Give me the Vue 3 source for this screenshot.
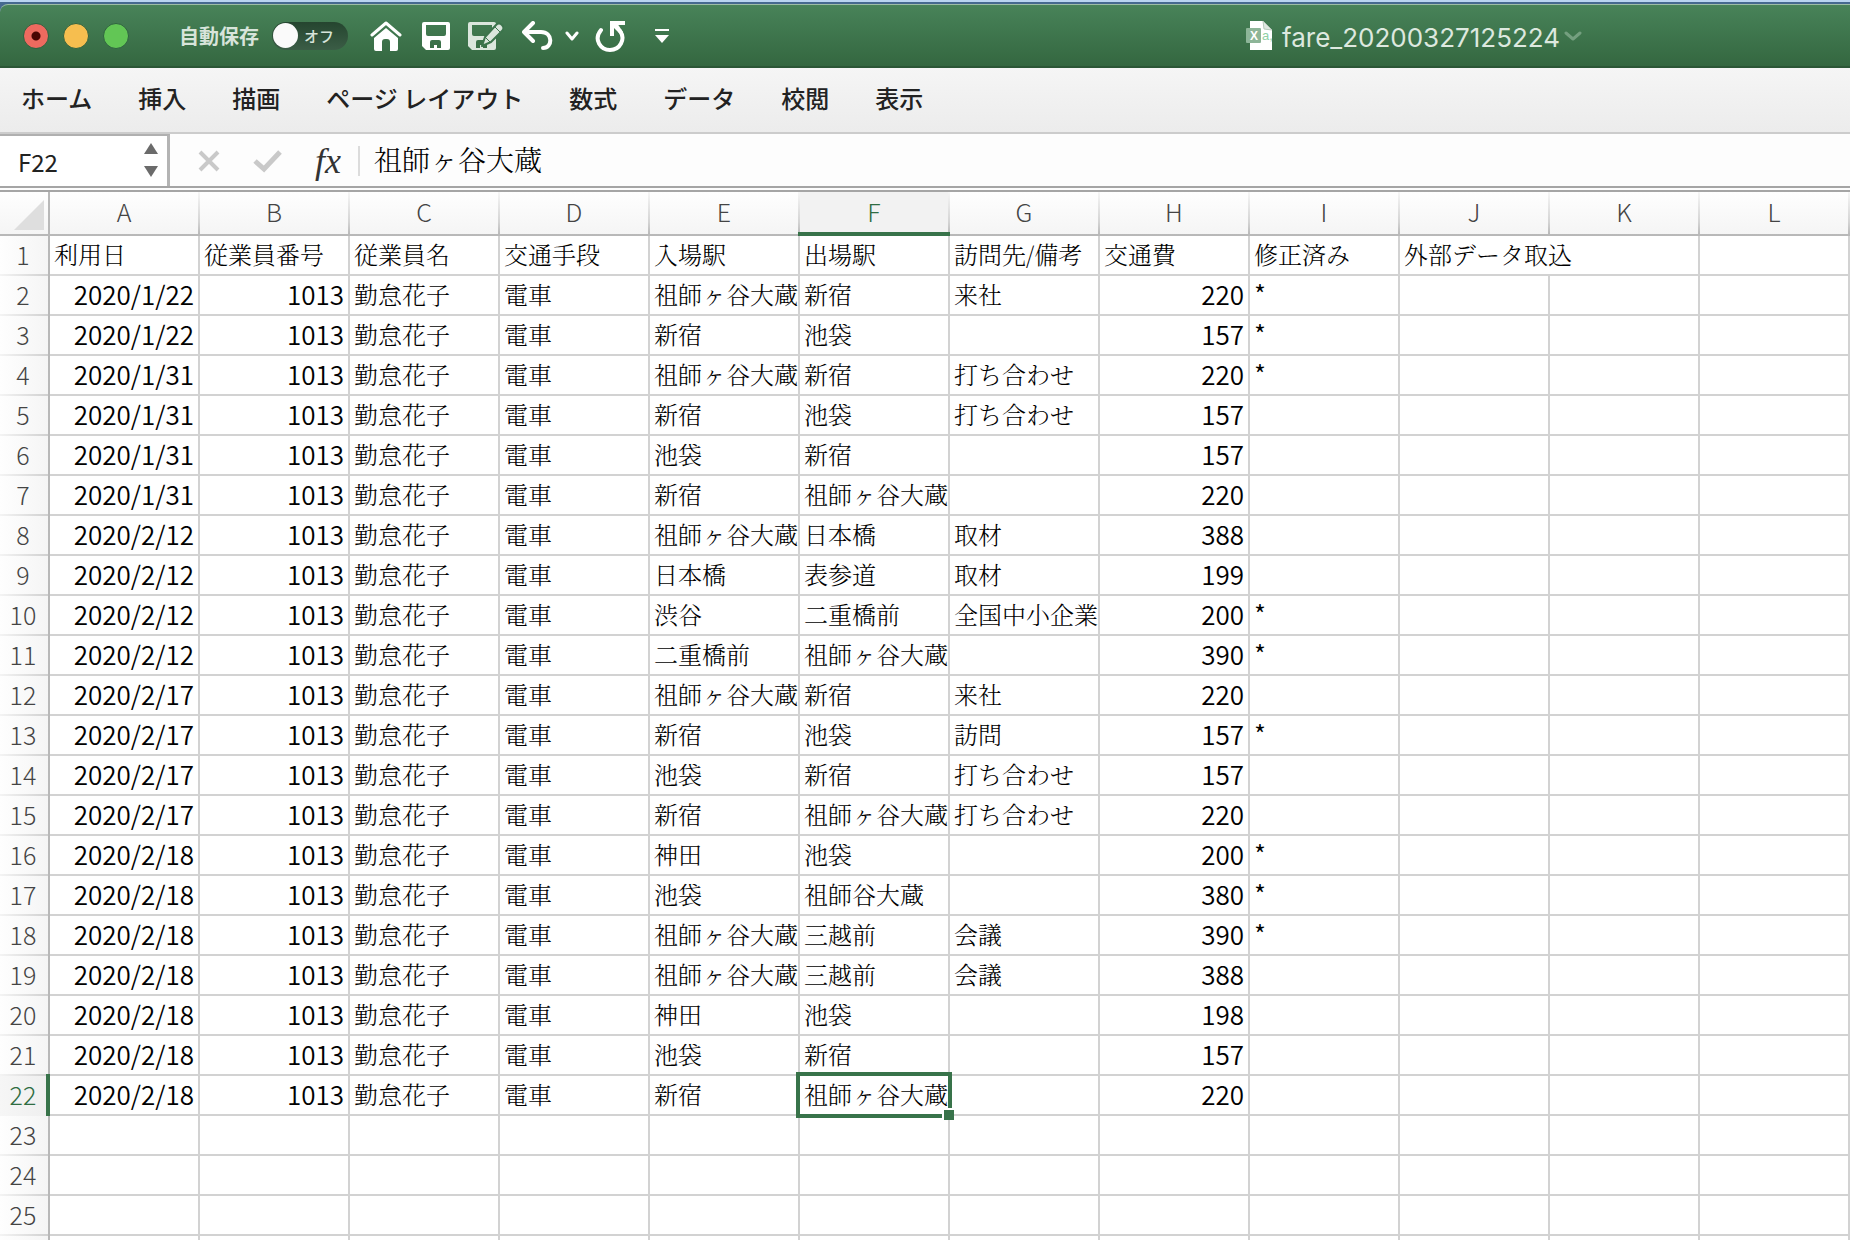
<script setup>
import { ref } from 'vue'

const tabs = ['ホーム', '挿入', '描画', 'ページ レイアウト', '数式', 'データ', '校閲', '表示']
const columns = 'ABCDEFGHIJKL'.split('')
const headings = ['利用日', '従業員番号', '従業員名', '交通手段', '入場駅', '出場駅', '訪問先/備考', '交通費', '修正済み']

const trips = [
  ['2020/1/22', '祖師ヶ谷大蔵', '新宿', '来社', 220, '*'],
  ['2020/1/22', '新宿', '池袋', '', 157, '*'],
  ['2020/1/31', '祖師ヶ谷大蔵', '新宿', '打ち合わせ', 220, '*'],
  ['2020/1/31', '新宿', '池袋', '打ち合わせ', 157, ''],
  ['2020/1/31', '池袋', '新宿', '', 157, ''],
  ['2020/1/31', '新宿', '祖師ヶ谷大蔵', '', 220, ''],
  ['2020/2/12', '祖師ヶ谷大蔵', '日本橋', '取材', 388, ''],
  ['2020/2/12', '日本橋', '表参道', '取材', 199, ''],
  ['2020/2/12', '渋谷', '二重橋前', '全国中小企業', 200, '*'],
  ['2020/2/12', '二重橋前', '祖師ヶ谷大蔵', '', 390, '*'],
  ['2020/2/17', '祖師ヶ谷大蔵', '新宿', '来社', 220, ''],
  ['2020/2/17', '新宿', '池袋', '訪問', 157, '*'],
  ['2020/2/17', '池袋', '新宿', '打ち合わせ', 157, ''],
  ['2020/2/17', '新宿', '祖師ヶ谷大蔵', '打ち合わせ', 220, ''],
  ['2020/2/18', '神田', '池袋', '', 200, '*'],
  ['2020/2/18', '池袋', '祖師谷大蔵', '', 380, '*'],
  ['2020/2/18', '祖師ヶ谷大蔵', '三越前', '会議', 390, '*'],
  ['2020/2/18', '祖師ヶ谷大蔵', '三越前', '会議', 388, ''],
  ['2020/2/18', '神田', '池袋', '', 198, ''],
  ['2020/2/18', '池袋', '新宿', '', 157, ''],
  ['2020/2/18', '新宿', '祖師ヶ谷大蔵', '', 220, ''],
]

const rows = trips.map(([date, from, to, note, fare, mark], i) => ({
  number: i + 2,
  cells: [date, '1013', '勤怠花子', '電車', from, to, note, fare, mark, '', '', ''],
}))
const emptyRows = [23, 24, 25]
const numeric = [0, 1, 7]

const autosave = ref(false)
const cellName = ref('F22')
const formula = ref('祖師ヶ谷大蔵')
const isSelected = (row, col) => row === 22 && col === 5
</script>

<template>
  <div class="window">
    <div class="desktop-edge">
      <header class="titlebar">
        <div class="lights">
          <button class="light close" aria-label="閉じる"></button>
          <button class="light minimize" aria-label="しまう"></button>
          <button class="light expand" aria-label="拡大"></button>
        </div>
        <label class="autosave">
          <span class="autosave-label">自動保存</span>
          <input v-model="autosave" type="checkbox" />
          <span class="switch"><span class="knob"></span><span class="state">オフ</span></span>
        </label>
        <div class="quick">
          <button class="icon home" aria-label="ホーム">
            <svg width="32" height="30" viewBox="0 0 32 30">
              <path d="M2 14 16 2 30 14" fill="none" stroke="#fff" stroke-width="3" stroke-linecap="round" stroke-linejoin="round" />
              <path d="M4 17 16 7l12 10v11a2 2 0 0 1-2 2h-6v-9q0-3-3-3h-2q-3 0-3 3v9H6a2 2 0 0 1-2-2z" fill="#fff" />
            </svg>
          </button>
          <button class="icon save" aria-label="保存">
            <svg width="28" height="28" viewBox="0 0 28 28">
              <path fill="#fff" fill-rule="evenodd" d="M2 0h24a2 2 0 0 1 2 2v24a2 2 0 0 1-2 2H4l-4-4V2a2 2 0 0 1 2-2zM4 3v9q0 2 2 2h16q2 0 2-2V3zM8 26h4v-3h3v3h4v-6q0-2-2-2h-7q-2 0-2 2z" />
            </svg>
          </button>
          <button class="icon save-as" aria-label="名前を付けて保存">
            <svg width="36" height="30" viewBox="0 0 36 30">
              <path fill="#dbe6dd" fill-rule="evenodd" d="M2 1h24a2 2 0 0 1 2 2v24a2 2 0 0 1-2 2H4l-4-4V3a2 2 0 0 1 2-2zM4 4v9q0 2 2 2h16q2 0 2-2V4zM8 27h4v-3h3v3h4v-6q0-2-2-2h-7q-2 0-2 2z" />
              <path d="M14 25l3-9L28 4q3-3 6 0t0 6L23 21z" fill="#dbe6dd" stroke="#3c744c" stroke-width="2" stroke-linejoin="round" />
              <path d="M26 5l6 6M17 16l5 5" stroke="#3c744c" stroke-width="1" />
            </svg>
          </button>
          <button class="icon undo" aria-label="元に戻す">
            <svg width="32" height="30" viewBox="0 0 32 30">
              <path d="M11 2 2 11l9 9M2 11h17c12 0 12 16 2 16" fill="none" stroke="#fff" stroke-width="4" stroke-linecap="round" stroke-linejoin="round" />
            </svg>
          </button>
          <button class="icon undo-more" aria-label="元に戻す履歴">
            <svg width="14" height="12" viewBox="0 0 14 12">
              <path d="M2 3l5 6 5-6" fill="none" stroke="#fff" stroke-width="3" stroke-linecap="round" stroke-linejoin="round" />
            </svg>
          </button>
          <button class="icon redo" aria-label="やり直し">
            <svg width="32" height="32" viewBox="0 0 32 32">
              <path d="M6 10C-2 20 6 30 15 30c10 0 16-11 10-19" fill="none" stroke="#fff" stroke-width="4" stroke-linecap="round" />
              <path d="M17 16V3h13" fill="none" stroke="#fff" stroke-width="4" stroke-linejoin="miter" />
              <path d="M17 3h5l6 9-4 1-5-5z" fill="#fff" />
            </svg>
          </button>
          <button class="icon customize" aria-label="ツールバーのカスタマイズ">
            <svg width="14" height="14" viewBox="0 0 14 14">
              <path d="M0 0h14v2H0zM0 6h14l-7 8z" fill="#fff" />
            </svg>
          </button>
        </div>
        <div class="document">
          <svg width="28" height="30" viewBox="0 0 28 30">
            <path d="M4 0h13l9 9v20H4z" fill="#fff" />
            <path d="M17 0l1 8 8 1z" fill="#dfe8e1" stroke="#b5c8b9" stroke-width="1" />
            <rect x="0" y="7" width="15" height="15" rx="1" fill="#8db598" />
            <text x="4" y="19" class="glyph x">X</text>
            <text x="16" y="19" class="glyph a">a,</text>
          </svg>
          <span class="filename">fare_20200327125224</span>
          <svg width="18" height="10" viewBox="0 0 18 10">
            <path d="M2 2l7 6 7-6" fill="none" stroke="#749f7f" stroke-width="3" stroke-linecap="round" stroke-linejoin="round" />
          </svg>
        </div>
      </header>
    </div>

    <nav class="ribbon">
      <button v-for="tab in tabs" :key="tab" class="tab">{{ tab }}</button>
    </nav>

    <div class="formula-bar">
      <div class="name-box">
        <input v-model="cellName" class="name" aria-label="名前ボックス" />
        <div class="spin">
          <button class="step up" aria-label="上へ"></button>
          <button class="step down" aria-label="下へ"></button>
        </div>
      </div>
      <div class="entry-tools">
        <button class="icon" aria-label="キャンセル">
          <svg width="24" height="24" viewBox="0 0 24 24">
            <path d="M3 3l18 18M21 3 3 21" stroke="#c9c9c9" stroke-width="4" />
          </svg>
        </button>
        <button class="icon" aria-label="入力">
          <svg width="30" height="24" viewBox="0 0 30 24">
            <path d="M2 12l9 8L27 3" fill="none" stroke="#c9c9c9" stroke-width="5" />
          </svg>
        </button>
        <button class="fx" aria-label="関数の挿入">fx</button>
      </div>
      <input v-model="formula" class="formula" aria-label="数式バー" />
    </div>

    <main class="sheet">
      <table>
        <colgroup>
          <col class="col-number" />
          <col v-for="c in columns" :key="c" class="col-data" />
        </colgroup>
        <thead>
          <tr>
            <th class="corner">
              <svg width="30" height="30" viewBox="0 0 30 30"><path d="M30 0v30H0z" fill="#dedede" /></svg>
            </th>
            <th v-for="c in columns" :key="c" scope="col" :class="{ active: c === 'F' }">{{ c }}</th>
          </tr>
        </thead>
        <tbody>
          <tr>
            <th scope="row">1</th>
            <td v-for="h in headings" :key="h">{{ h }}</td>
            <td colspan="2">外部データ取込</td>
            <td></td>
          </tr>
          <tr v-for="row in rows" :key="row.number">
            <th scope="row" :class="{ active: row.number === 22 }">{{ row.number }}</th>
            <td
              v-for="(cell, i) in row.cells"
              :key="i"
              :class="{ number: numeric.includes(i), mark: i === 8, selected: isSelected(row.number, i) }"
            >{{ cell }}<span v-if="isSelected(row.number, i)" class="handle"></span></td>
          </tr>
          <tr v-for="n in emptyRows" :key="n">
            <th scope="row">{{ n }}</th>
            <td v-for="c in columns" :key="c"></td>
          </tr>
          <tr>
            <th></th>
            <td v-for="c in columns" :key="c"></td>
          </tr>
        </tbody>
      </table>
    </main>
  </div>
</template>

<style>
body {
  margin: 0;
  background: #fff;
}
</style>

<style scoped>
* {
  box-sizing: border-box;
}
.window {
  display: flex;
  flex-direction: column;
  height: 100vh;
  overflow: hidden;
  font-family: "Noto Sans CJK JP", sans-serif;
}
button {
  margin: 0;
  padding: 0;
  border: 0;
  background: none;
  font: inherit;
  color: inherit;
}
svg {
  display: block;
}

/* title bar */
.desktop-edge {
  flex: none;
  border-top: 2px solid #b9d5f0;
  background: #45698f;
  padding-top: 2px;
}
.titlebar {
  display: flex;
  align-items: center;
  height: 64px;
  padding-left: 23px;
  border-top: 1px solid #9dbda5;
  border-bottom: 2px solid #2b5636;
  border-top-left-radius: 8px;
  background: linear-gradient(#488359, #346740);
}
.lights {
  display: flex;
  gap: 14px;
}
.light {
  width: 26px;
  height: 26px;
  border: 1px solid #2f6240;
  border-radius: 50%;
}
.close {
  background: radial-gradient(circle, #4a0502 0 4px, #ee6a5f 5px);
}
.minimize {
  background: #f6be4f;
}
.expand {
  background: #62c655;
}
.autosave {
  display: flex;
  align-items: center;
  gap: 13px;
  margin-left: 50px;
  color: #d7e4da;
}
.autosave-label {
  font-size: 20px;
  font-weight: 700;
  line-height: 28px;
}
.autosave input {
  position: absolute;
  opacity: 0;
}
.switch {
  display: flex;
  align-items: center;
  gap: 6px;
  width: 76px;
  height: 28px;
  padding: 0 1px;
  border-radius: 14px;
  background: linear-gradient(#25452f, #3b5d46);
}
.knob {
  width: 25px;
  height: 25px;
  border-radius: 50%;
  background: #fafafa;
}
.state {
  font-size: 15px;
  font-weight: 500;
  line-height: 20px;
}
.quick {
  display: flex;
  align-items: center;
  margin-left: 22px;
}
.save {
  margin-left: 20px;
}
.save-as {
  margin-left: 18px;
}
.undo {
  margin-left: 18px;
}
.undo-more {
  margin-left: 11px;
}
.redo {
  margin-left: 16px;
}
.customize {
  margin-left: 28px;
}
.document {
  display: flex;
  align-items: center;
  margin-left: 577px;
}
.filename {
  margin: 0 4px 0 8px;
  padding-top: 4px;
  font-family: Inter, "Liberation Sans", sans-serif;
  font-size: 26px;
  line-height: 32px;
  color: #dde8df;
}
.glyph {
  font-family: "Liberation Sans", sans-serif;
}
.x {
  font-size: 12px;
  font-weight: 700;
  fill: #fff;
}
.a {
  font-size: 13px;
  fill: #8fd0a5;
}

/* ribbon tabs */
.ribbon {
  flex: none;
  display: flex;
  align-items: center;
  gap: 46px;
  height: 66px;
  padding: 0 21px 4px;
  border-bottom: 2px solid #cccccc;
  background: linear-gradient(#f5f5f5, #ececec);
  color: #222;
}
.tab {
  font-size: 24px;
  font-weight: 500;
  line-height: 36px;
  white-space: nowrap;
}

/* formula bar */
.formula-bar {
  flex: none;
  display: flex;
  height: 58px;
  border-bottom: 6px double #a5a5a5;
  background: #fdfdfd;
}
.name-box {
  display: flex;
  align-items: center;
  width: 170px;
  padding: 0 9px 2px 18px;
  border-top: 2px solid #b0b0b0;
  border-right: 3px solid #b4b4b4;
  background: #fff;
}
.name {
  flex: 1;
  min-width: 0;
  padding: 2px 0 0;
  border: 0;
  outline: 0;
  background: none;
  font: 24px "Noto Sans CJK JP", sans-serif;
  color: #222;
}
.spin {
  display: flex;
  flex-direction: column;
  gap: 12px;
}
.step {
  width: 14px;
  height: 11px;
  background: #6b6b6b;
}
.up {
  clip-path: polygon(50% 0, 100% 100%, 0 100%);
}
.down {
  clip-path: polygon(0 0, 100% 0, 50% 100%);
}
.entry-tools {
  display: flex;
  align-items: center;
  gap: 32px;
  width: 190px;
  margin: 12px 0 10px;
  padding-left: 27px;
  border-right: 2px solid #dcdcdc;
}
.fx {
  font: italic 400 36px/30px "Liberation Serif", serif;
  color: #333;
}
.formula {
  flex: 1;
  min-width: 0;
  padding: 0 14px 2px;
  border: 0;
  outline: 0;
  background: none;
  font: 300 28px "Noto Serif CJK JP", "Noto Sans CJK JP", serif;
  color: #000;
}

/* grid */
.sheet {
  flex: 1;
  min-height: 0;
  overflow: hidden;
}
table {
  width: 1px;
  table-layout: fixed;
  border-collapse: separate;
  border-spacing: 0;
}
.col-number {
  width: 50px;
}
.col-data {
  width: 150px;
}
th,
td {
  position: relative;
  height: 40px;
  white-space: nowrap;
  line-height: 36px;
}
th {
  padding: 0 0 4px;
  font-family: "Noto Sans CJK JP", sans-serif;
  font-size: 25px;
  font-weight: 300;
  line-height: 34px;
  color: #444;
}
thead th {
  height: 44px;
  border-right: 2px solid;
  border-bottom: 2px solid #b8b8b8;
  border-image: linear-gradient(#f8f8f8, #d4d4d4 70%, #b8b8b8 97%) 2;
  border-top: 0;
  border-left: 0;
  background: linear-gradient(#fefefe, #f5f5f5);
}
thead .corner {
  padding: 0;
  border-image: none;
  border-color: #b8b8b8;
}
.corner svg {
  margin: 4px 0 0 14px;
}
tbody th {
  padding-right: 2px;
  border-right: 2px solid #b8b8b8;
  background:
    linear-gradient(90deg, #f4f4f4, #d0d0d0) bottom / 100% 2px no-repeat,
    linear-gradient(90deg, #fefefe, #f5f5f5);
}
th.active {
  z-index: 1;
  color: #2f6d42;
}
thead th.active {
  background: #f2f2f2;
}
tbody th.active {
  background: linear-gradient(90deg, #f6f6f6, #efefef);
}
th.active::after {
  content: "";
  position: absolute;
  background: #38734a;
}
thead th.active::after {
  left: -2px;
  right: -2px;
  bottom: -2px;
  height: 4px;
}
tbody th.active::after {
  top: -2px;
  bottom: 0;
  right: -2px;
  width: 4px;
}
td {
  padding: 0 0 2px 4px;
  border-right: 2px solid #d2d2d2;
  border-bottom: 2px solid #d2d2d2;
  background: #fff;
  font-family: "Noto Serif CJK JP", "Noto Sans CJK JP", serif;
  font-size: 24px;
  font-weight: 300;
  color: #000;
}
td.number,
td.mark {
  font-family: "Noto Sans CJK JP", sans-serif;
  font-size: 26px;
  font-weight: 350;
}
td.number {
  padding: 0 4px 2px 0;
  text-align: right;
}
td.selected {
  z-index: 1;
}
.selected::after {
  content: "";
  position: absolute;
  inset: -4px;
  border: 4px solid #38734a;
}
.handle {
  position: absolute;
  z-index: 1;
  right: -6px;
  bottom: -6px;
  width: 12px;
  height: 12px;
  border-top: 2px solid #fff;
  border-left: 2px solid #fff;
  background: #38734a;
}
</style>
